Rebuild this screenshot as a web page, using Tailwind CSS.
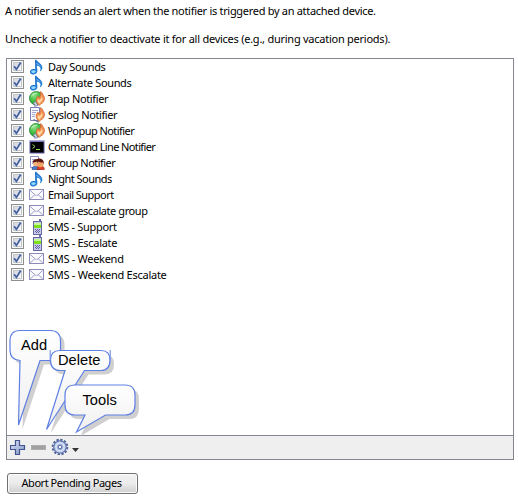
<!DOCTYPE html>
<html lang="en">
<head>
<meta charset="utf-8">
<title>Notifiers</title>
<script src="https://cdn.jsdelivr.net/npm/@tailwindcss/browser@4"></script>
</head>
<body class="w-[518px] h-[500px] overflow-hidden bg-white text-black text-[11px] leading-4 font-['Noto_Sans',sans-serif]">
<svg class="absolute w-0 h-0">
  <defs>
    <linearGradient id="gBox" x1="0" y1="0" x2="1" y2="1"><stop offset="0" stop-color="#d0d4da"/><stop offset="1" stop-color="#fafafa"/></linearGradient>
    <linearGradient id="gNote" x1="0" y1="0" x2="1" y2="1"><stop offset="0" stop-color="#1560c4"/><stop offset="1" stop-color="#2d8ee0"/></linearGradient>
    <radialGradient id="gGreen" cx=".35" cy=".3" r=".8"><stop offset="0" stop-color="#8be284"/><stop offset=".6" stop-color="#35b63a"/><stop offset="1" stop-color="#168a22"/></radialGradient>
    <linearGradient id="gFlame" x1="0" y1="0" x2="0" y2="1"><stop offset="0" stop-color="#ee8248"/><stop offset="1" stop-color="#f7a155"/></linearGradient>
    <linearGradient id="gPlus" x1="0" y1="0" x2="1" y2="1"><stop offset="0" stop-color="#dfe6f6"/><stop offset="1" stop-color="#7f93c6"/></linearGradient>
    <linearGradient id="gCall" x1="0" y1="0" x2="0" y2="1"><stop offset="0" stop-color="#fff"/><stop offset="1" stop-color="#efefef"/></linearGradient>
  </defs>
  <symbol id="check" viewBox="0 0 13 13">
    <rect x=".5" y=".5" width="12" height="12" fill="#f6f6f6" stroke="#8e8f8f"/>
    <rect x="2.500" y="2.500" width="8" height="8" fill="url(#gBox)" stroke="#c6cad0"/>
    <path d="M3.200 6.200 5.400 9.400 9.700 2.600" fill="none" stroke="#45609f" stroke-width="1.800"/>
  </symbol>
  <symbol id="flame" viewBox="0 0 16 16">
    <path d="M11.300.6c2.400 1 2.200 2.500 3.200 3.800 1.500 2 1.300 5.400-.6 7.100-1.100 1-2.400 1.300-3.400 2.900C8.200 12.800 6.800 10.800 7.200 8.200c.3-1.300 1.100-2 1.500-3.100.8.400 1.100 1 1.300 1.700C11.500 5.200 12 3 11.300.6z" fill="url(#gFlame)" stroke="#cc6436" stroke-width=".7"/>
    <path d="M12.800 5c1.100 2 .9 4-.4 5.300-.9.9-1.600 1.400-2 2.500C8.900 11.700 8.300 10.200 8.900 7.800c.6.400.9.800 1.100 1.500C11.700 8.400 12.900 7 12.800 5z" fill="#ffd9a6"/>
  </symbol>
  <symbol id="note" viewBox="0 0 16 16">
    <path d="M6 1.200 7.200.5C8 3 14 4.800 13.400 9.600l-1.600 2.700-.8-.5C12.300 8.900 11 7.300 7.800 6.600L8.500 12.200C8 14.800 5.400 15.800 3.300 15.400.4 14.800.3 11.600 2.500 10.500c1.200-.6 2.700-.6 3.700-.2z" fill="url(#gNote)"/>
    <path d="M2 12.800c.4-1.600 3-2 4.700-1L6.900 12.600C6 14.200 3.500 14.900 2 12.800z" fill="#90d8fc"/>
    <path d="M7.400 3.200C8.500 5 11.500 6 12 8.100 10.800 6.200 9 5.500 7.700 5.200z" fill="#8ccdfa"/>
  </symbol>
  <symbol id="trap" viewBox="0 0 16 16">
    <circle cx="7.200" cy="7.200" r="6.700" fill="url(#gGreen)" stroke="#21842b" stroke-width=".8"/>
    <path d="M2 6C2.500 2.500 6 1.200 9 2.200 6 3 4 4 2 6z" fill="#d6f7d2" opacity=".7"/>
    <path d="M6.500 10.500 9 14.500 5.500 15.300 6 13.300 4 12.500z" fill="#dcdcf0" stroke="#6a6a9c" stroke-width=".7"/>
    <use href="#flame"/>
  </symbol>
  <symbol id="syslog" viewBox="0 0 16 16">
    <path d="M1.500.5h9v13h-9z" fill="#f8f9ff" stroke="#7a7db4"/>
    <path d="M3 3.500h6M3 5.500h4M3 7.500h3M3 9.500h3" stroke="#a3a6d0"/>
    <path d="M4.500 12.500 10 15.300" stroke="#66658e" stroke-width="1.200"/>
    <use href="#flame"/>
  </symbol>
  <symbol id="cmd" viewBox="0 0 16 16">
    <rect x="1" y="2" width="14" height="12" fill="#000" stroke="#5c5ca4"/>
    <path d="M1 2.500h14" stroke="#7878c0"/>
    <path d="M3.500 5.500 6 7.500 3.500 9.500M7 10.500h4" fill="none" stroke="#8cdc50"/>
  </symbol>
  <symbol id="group" viewBox="0 0 16 16">
    <path d="M1.500 1.500h8v11h-8z" fill="#fff" stroke="#8b8fca"/>
    <path d="M3 4.500h4M3 6.500h3M3 8.500h2" stroke="#a7aada"/>
    <path d="M3 14.500c0-3 2-3.500 4-3.500s4 .5 4 3.500z" fill="#4777d0" stroke="#27427f" stroke-width=".6"/>
    <path d="M8 14.500c0-3 1.500-3.500 3.500-3.500s3.800.5 3.800 3.500z" fill="#e23c20" stroke="#8f1b10" stroke-width=".6"/>
    <circle cx="7" cy="8.500" r="3" fill="#f2b27c"/><circle cx="11.500" cy="9" r="3.200" fill="#f0a264"/>
    <path d="M3.700 8C3.500 5 5.400 4 7.300 4.200 11 2.200 15.400 4.400 15 9l-1-1.800c-2 .4-3.300.2-4.500-.7L8.300 8 7.800 6.500C6 7.500 5 7 3.700 8z" fill="#5c1710"/>
  </symbol>
  <symbol id="mail" viewBox="0 0 16 16">
    <rect x=".5" y="2.500" width="14" height="10" fill="#fafaff" stroke="#8c8cb8"/>
    <path d="M1.300 3.500 6.200 8Q7.500 9.200 8.800 8l4.900-4.500M1.300 11.800 5.700 7.800M13.700 11.800 9.300 7.800" fill="none" stroke="#9b9bc4"/>
  </symbol>
  <symbol id="phone" viewBox="0 0 16 16">
    <path d="M10 0h2v3h-2z" fill="#6c6ca8"/>
    <rect x="4.500" y="2.500" width="8" height="13" fill="#c9c9ee" stroke="#6868a4"/>
    <path d="M5 4h7v5H5z" fill="#7ee01c"/><path d="M5 4h7v2H5z" fill="#c6f792"/>
    <path d="M6 10.500h1m1 0h1m1 0h1M6 12.500h1m1 0h1m1 0h1M7 11.500h1m1 0h1M7 13.500h1m1 0h1" stroke="#6464a2"/>
  </symbol>
</svg>

<main class="relative h-full">
  <p class="pl-[5px] pt-[3px] whitespace-nowrap tracking-[-0.3px]">A notifier sends an alert when the notifier is triggered by an attached device.</p>
  <p class="pl-[5px] pt-3 whitespace-nowrap tracking-[-0.25px]">Uncheck a notifier to deactivate it for all devices (e.g., during vacation periods).</p>

  <section class="mt-[11px] ml-[6px] w-[508px] h-[402px] border border-[#828790] flex flex-col">
    <ul id="list" class="flex-1 pl-1"></ul>
    <div class="h-[23px] box-content border-t border-[#828790] bg-[#efefef] flex items-center pl-[3px]">
      <svg class="w-4 h-4" viewBox="0 0 16 16"><path d="M6 1h4v5h5v4h-5v5H6v-5H1V6h5z" transform="translate(-.5 -.5)" fill="url(#gPlus)" stroke="#42538f" stroke-width="1.200"/></svg>
      <svg class="w-4 h-4 ml-[5px]" viewBox="0 0 16 16"><rect x=".5" y="5.500" width="14" height="4" fill="#a0a0a0" stroke="#adadad"/></svg>
      <svg class="w-[18px] h-[18px] ml-[4px] -mt-px" viewBox="0 0 18 18"><circle cx="9" cy="9" r="7.300" fill="none" stroke="#4d6196" stroke-width="2" stroke-dasharray="2.300 1.523"/><circle cx="9" cy="9" r="6.200" fill="#c6d3ee" stroke="#6378b0" stroke-width="1.200"/><circle cx="9" cy="9" r="4" fill="#a9b9de" stroke="#dfe7f8"/><circle cx="9" cy="9" r="1.800" fill="#f4f6fc" stroke="#566aa3"/></svg>
      <svg class="w-[7px] h-[4px] ml-[3px] mt-[4px]" viewBox="0 0 7 4"><path d="M0 0h7L3.500 4z" fill="#333"/></svg>
    </div>
  </section>

  <button class="mt-[13px] ml-[7px] w-[131px] h-[21px] block rounded-[3px] border border-[#707070] bg-linear-to-b from-[#f2f2f2] from-0% via-[#ebebeb] via-50% to-[#cfcfcf] shadow-[inset_0_0_0_1px_#fbfbfb] leading-[17px] pb-[2px] pr-[2px] whitespace-nowrap tracking-[-0.45px]">Abort Pending Pages</button>

  <svg class="absolute left-0 top-[320px] w-[150px] h-[120px] font-['Liberation_Sans',sans-serif] text-[14.67px]" viewBox="0 320 150 120">
    <defs>
      <path id="c1" d="M20 330.500H50Q60.500 330.500 60.500 341V350Q60.500 360.500 50 360.500H40L18.500 425 20 360.500Q10 360 10 350V341Q10 330.500 20 330.500Z"/>
      <path id="c2" d="M60 350.500H101Q110 350.500 110 360 110 370.500 101 370.500H84.500L46.500 429.500 65 370.500H60Q50.500 370.500 50.500 360 50.500 350.500 60 350.500Z"/>
      <path id="c3" d="M75 385H125Q135 385 135 395V405Q135 415 125 415H105.500L76.500 432 85 415H75Q65 415 65 405V395Q65 385 75 385Z"/>
    </defs>
    <g stroke-width="1.200">
      <use href="#c1" x="4" y="4" fill="#cfcfcf"/><use href="#c1" fill="url(#gCall)" stroke="#5f80e4"/>
      <use href="#c2" x="4" y="4" fill="#cfcfcf"/><use href="#c2" fill="url(#gCall)" stroke="#5f80e4"/>
      <path d="M50.200 350v10M110.200 350v10" stroke="#7d9af0"/>
      <use href="#c3" x="4" y="4" fill="#cfcfcf"/><use href="#c3" fill="url(#gCall)" stroke="#5f80e4"/>
    </g>
    <text x="21" y="350">Add</text>
    <text x="58" y="365">Delete</text>
    <text x="82.500" y="405">Tools</text>
  </svg>
</main>

<script>
const rows = [
  ["note", "Day Sounds", "tracking-[-0.35px]"],
  ["note", "Alternate Sounds", "tracking-[-0.34px]"],
  ["trap", "Trap Notifier", "tracking-[-0.36px]"],
  ["syslog", "Syslog Notifier", "tracking-[-0.4px]"],
  ["trap", "WinPopup Notifier", "tracking-[-0.55px]"],
  ["cmd", "Command Line Notifier", "tracking-[-0.63px]"],
  ["group", "Group Notifier", "tracking-[-0.52px]"],
  ["note", "Night Sounds", "tracking-[-0.51px]"],
  ["mail", "Email Support", "tracking-[-0.54px]"],
  ["mail", "Email-escalate group", "tracking-[-0.43px]"],
  ["phone", "SMS - Support", "tracking-[-0.33px]"],
  ["phone", "SMS - Escalate", "tracking-[-0.3px]"],
  ["mail", "SMS - Weekend", "tracking-[-0.29px]"],
  ["mail", "SMS - Weekend Escalate", "tracking-[-0.26px]"]
];
document.getElementById("list").innerHTML = rows.map(([icon, label, spacing]) => `
  <li class="h-4 flex items-center whitespace-nowrap">
    <svg class="w-[13px] h-[13px] -mt-px"><use href="#check"/></svg>
    <svg class="w-4 h-4 ml-[5px] mr-[3px]"><use href="#${icon}"/></svg>
    <span class="${spacing}">${label}</span>
  </li>`).join("");
</script>
</body>
</html>
